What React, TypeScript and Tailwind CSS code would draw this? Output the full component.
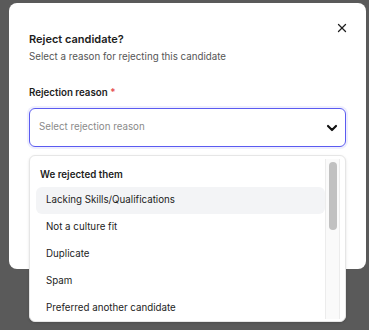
import { X, ChevronDown } from 'lucide-react'

const REASONS = [
  'Lacking Skills/Qualifications',
  'Not a culture fit',
  'Duplicate',
  'Spam',
  'Preferred another candidate',
]

export default function App() {
  return (
    <div
      className="w-[369px] h-[330px] overflow-hidden bg-[#5a5a5a] pt-[3px] pl-[9px]"
      style={{ fontFamily: 'Inter, "Noto Sans", sans-serif' }}
    >
      {/* Modal */}
      <div className="relative w-[357px] h-[266px] rounded-lg bg-white px-5 pt-[26px]">
        <button className="absolute right-[17px] top-[18px] text-[#1f1f1f]">
          <X size={14} strokeWidth={2.2} />
        </button>

        <h2 className="text-[11px] leading-5 font-semibold text-[#1c1c1c]">Reject candidate?</h2>
        <p className="text-[9.75px] leading-4 text-[#555]">Select a reason for rejecting this candidate</p>

        <label className="block mt-[20px] text-[9.75px] leading-4 font-semibold text-[#1c1c1c]">
          Rejection reason <span className="text-[#e5484d]">*</span>
        </label>

        {/* Select */}
        <div className="relative mt-[7px]">
          <div className="h-[39px] rounded-md border border-[#5b5bf0] ring-2 ring-[#eeeefe] flex items-center justify-between pl-[9px] pr-[5px]">
            <span className="text-[9.75px] text-[#8a8a8a]">Select rejection reason</span>
            <ChevronDown size={16} strokeWidth={3.2} className="text-[#111]" />
          </div>

          {/* Dropdown */}
          <div className="absolute left-0 right-0 top-full mt-2 h-[167px] rounded-md border border-[#e6e6e6] bg-white shadow-sm flex pt-[3px] pb-[3px] pl-[6px] pr-[5px] overflow-hidden">
            <div className="flex-1 pt-[8px]">
              <div className="pl-1 h-4 leading-4 text-[9.75px] font-semibold text-[#1c1c1c]">We rejected them</div>
              <div className="mt-[4px]">
                {REASONS.map((r, i) => (
                  <div
                    key={r}
                    className={`h-[27px] flex items-center pl-[10px] text-[9.75px] text-[#1c1c1c] rounded-md ${
                      i === 0 ? 'bg-[#f3f4f6]' : ''
                    }`}
                  >
                    {r}
                  </div>
                ))}
              </div>
            </div>
            {/* Scrollbar */}
            <div className="w-[15px] h-[160px] border-x border-[#ececec] bg-[#fafafa] pt-[3px] flex justify-center">
              <div className="w-[8px] h-[68px] rounded-full bg-[#c1c1c1]" />
            </div>
          </div>
        </div>
      </div>
    </div>
  )
}
